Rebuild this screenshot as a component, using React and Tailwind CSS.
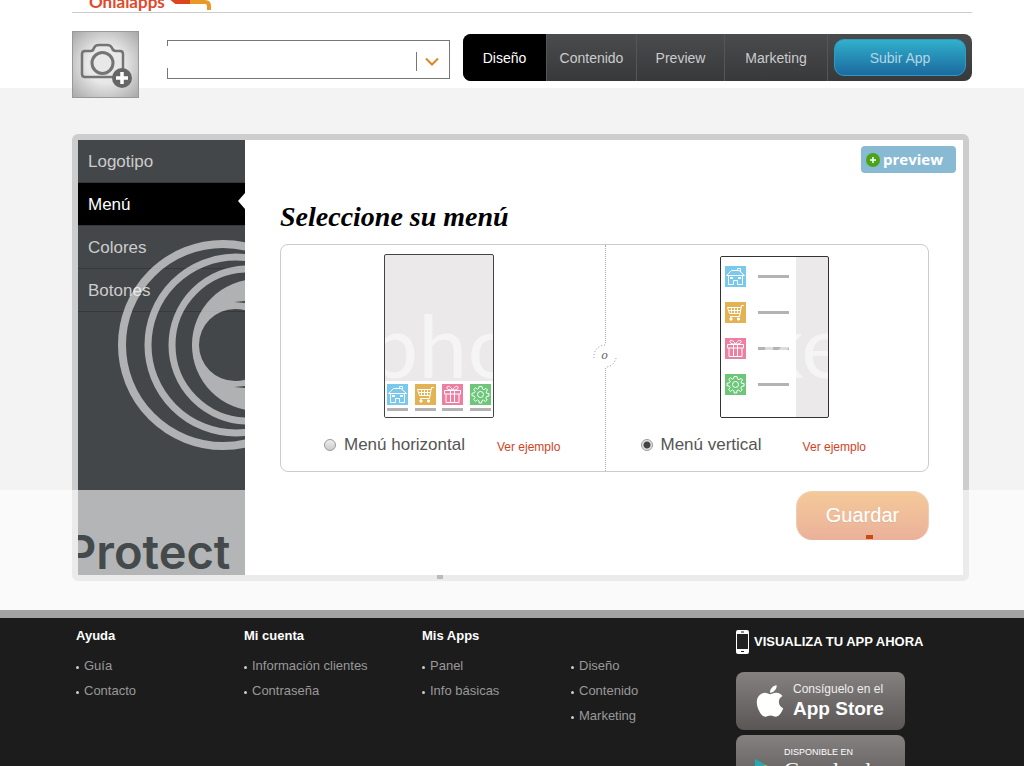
import React, { useState } from "react";
import { FaApple } from "react-icons/fa";

const tabs = [
  { name: "Diseño", width: "w-[84px]" },
  { name: "Contenido", width: "w-[90px]" },
  { name: "Preview", width: "w-[88px]" },
  { name: "Marketing", width: "w-[103px]" },
];

const sections = ["Logotipo", "Menú", "Colores", "Botones"];

const footerColumns = [
  { title: "Ayuda", links: ["Guía", "Contacto"] },
  { title: "Mi cuenta", links: ["Información clientes", "Contraseña"] },
  { title: "Mis Apps", links: ["Panel", "Info básicas"] },
  { title: "", links: ["Diseño", "Contenido", "Marketing"] },
];

const HomeTile = () => (
  <svg viewBox="0 0 21 21" className="w-[21px] h-[21px] bg-[#79c9ec]" fill="none" stroke="#fff">
    <path d="M1.5 9.5 L6.5 4.5 H14 L19.5 9.5 Z M3.5 9.5 V18.5 H8.5 V14.5 H12.5 V18.5 H17.5 V9.5 M12.5 4.5 V2.5 H15.5 V6" />
    <path d="M5 12 H8 M13 12 H16" strokeWidth="2" />
  </svg>
);

const CartTile = () => (
  <svg viewBox="0 0 21 21" className="w-[21px] h-[21px] bg-[#e3b253]" fill="none" stroke="#fff">
    <path d="M19 3.5 H16.5 L14.5 14.5 H5 M16 5.5 H2.5 L4.5 11.5 H15 M3.5 8.5 H15.5 M6.5 5.5 V11.5 M9.5 5.5 V11.5 M12.5 5.5 V11.5" />
    <circle cx="6" cy="17" r="1.2" fill="#fff" />
    <circle cx="13.5" cy="17" r="1.2" fill="#fff" />
  </svg>
);

const GiftTile = () => (
  <svg viewBox="0 0 21 21" className="w-[21px] h-[21px] bg-[#ec7fa2]" fill="none" stroke="#fff">
    <path d="M2.5 6.5 H18.5 V10 H2.5 Z M4 10 V18.5 H17 V10 M8.5 6.5 V18.5 M12.5 6.5 V18.5" />
    <path d="M10.5 6 C8 1.5 4.5 1.5 5 4 C5.5 6 8 6 10.5 6 C13 1.5 16.5 1.5 16 4 C15.5 6 13 6 10.5 6" />
  </svg>
);

const GearTile = () => (
  <svg viewBox="0 0 21 21" className="w-[21px] h-[21px] bg-[#6cc878]" fill="none" stroke="#fff">
    <circle cx="10.5" cy="10.5" r="3" />
    <path d="M9 2.5 H12 L12.5 5 L14 5.7 L16 4.3 L17.5 6 L16 8 L16.5 9.3 L19 9.5 V12 L16.5 12.5 L15.8 14 L17.2 16 L15.5 17.5 L13.5 16 L12 16.5 L11.7 19 H9.3 L8.8 16.5 L7.5 15.9 L5.5 17.3 L3.7 15.5 L5.1 13.5 L4.5 12.2 L2 11.7 V9.3 L4.5 8.8 L5.2 7.3 L3.8 5.3 L5.5 3.8 L7.5 5.2 L8.6 4.7 Z" />
  </svg>
);

const tiles = [HomeTile, CartTile, GiftTile, GearTile];

const HorizontalPhone = () => (
  <div className="relative w-[110px] h-[164px] rounded-xs border border-[#444] bg-[#ebe9ea] flex flex-col justify-end overflow-hidden">
    <svg className="absolute left-0 top-0 w-full h-full" viewBox="0 0 108 162">
      <text x="-16" y="123" fontFamily="Lato" fontSize="88" fill="#fff" fillOpacity="0.55">
        pho
      </text>
    </svg>
    <div className="relative bg-white h-9 pt-[3px] px-0.5 flex justify-between">
      {tiles.map((Tile, index) => (
        <div key={index} className="flex flex-col gap-[3px]">
          <Tile />
          <span className="h-[3px] bg-[#b3b3b3]" />
        </div>
      ))}
    </div>
  </div>
);

const VerticalPhone = () => (
  <div className="relative w-[109px] h-[162px] rounded-xs border border-[#333] bg-[#ebe9ea] overflow-hidden">
    <div className="w-[75px] h-full bg-white pt-[9px] pl-1 flex flex-col gap-[15px]">
      {tiles.map((Tile, index) => (
        <div key={index} className="flex items-center gap-3">
          <Tile />
          <span className="w-[31px] h-[3px] bg-[#b3b3b3]" />
        </div>
      ))}
    </div>
    <svg className="absolute left-0 top-0 w-full h-full" viewBox="0 0 107 160">
      <text x="38" y="121" fontFamily="Lato" fontSize="88" fill="#fff" fillOpacity="0.55">
        ke
      </text>
    </svg>
  </div>
);

const MenuOption = ({ value, label, selected, onSelect, rowClass }) => (
  <div className={`flex items-center text-[#555] ${rowClass}`}>
    <label className="flex items-center gap-2 text-[17px] leading-6">
      <input
        type="radio"
        name="menu"
        value={value}
        checked={selected}
        onChange={() => onSelect(value)}
        className="appearance-none w-3 h-3 rounded-full border border-[#999] bg-linear-to-b from-[#eee] to-[#ccc] checked:bg-[radial-gradient(circle,#444_0_3px,#e4e4e4_4px)]"
      />
      {label}
    </label>
    <a href="#ejemplo" className="text-xs leading-6 pt-1 text-[#d0431f]">
      Ver ejemplo
    </a>
  </div>
);

const Header = () => {
  const [activeTab, setActiveTab] = useState("Diseño");

  return (
    <header className="h-[88px] bg-white pl-[72px] pr-[52px]">
      <div className="h-[13px] border-b border-[#ccc] pl-[17px] flex items-end overflow-hidden">
        <a href="#inicio" className="flex items-end gap-1">
          <span className="font-['Lato',sans-serif] font-bold text-[17px] leading-4 text-[#e2492a] pb-0.5">
            Onialapps
          </span>
          <svg className="w-12 h-3" viewBox="0 0 48 12" fill="none" strokeWidth="4">
            <path d="M1 -3 L7 2 H22" stroke="#df4420" />
            <path d="M21 2 H36 Q40 2 40 6 V10" stroke="#e79a26" />
          </svg>
        </a>
      </div>

      <div className="pt-[18px] flex items-start">
        <button
          aria-label="Cambiar foto"
          className="w-[67px] h-[67px] shrink-0 border border-[#999] bg-[radial-gradient(circle,#e8e8e8_40%,#a8a8a8_100%)] flex items-center justify-center"
        >
          <svg className="w-[52px] h-[46px]" viewBox="0 0 52 46" fill="none" stroke="#747474" strokeWidth="2.5">
            <path d="M34 35 H5 Q2 35 2 32 V12 Q2 9 5 9 H11 Q13 9 14 6 Q15 3 19 3 H27 Q31 3 32 6 Q33 9 36 9 H40 Q43 9 43 12 V27" />
            <circle cx="22.5" cy="21" r="10.5" strokeWidth="3" />
            <circle cx="42" cy="36" r="10" fill="#666" stroke="none" />
            <path d="M42 30 V42 M36 36 H48" stroke="#fff" strokeWidth="3.5" />
          </svg>
        </button>

        <div className="relative flex-1 ml-7 mt-[9px]">
          <select
            aria-label="Aplicación"
            className="appearance-none block w-full h-[39px] border border-[#777] bg-white px-3 text-sm"
          >
            <option value=""></option>
          </select>
          <span className="absolute left-0 top-[6px] w-px h-[22px] bg-white" />
          <svg className="absolute right-2 top-3 w-7 h-5 pointer-events-none" viewBox="0 0 28 20" fill="none">
            <path d="M2.5 0 V19" stroke="#777" />
            <path d="M12 6.5 L18 12.5 L24 6.5" stroke="#e08427" strokeWidth="2" />
          </svg>
        </div>

        <nav className="ml-[13px] mt-[3px] h-[47px] flex items-center rounded-lg overflow-hidden bg-linear-to-b from-[#4a4b4d] to-[#38393b] text-sm">
          {tabs.map((tab) => (
            <button
              key={tab.name}
              onClick={() => setActiveTab(tab.name)}
              className={`${tab.width} h-full border-r border-[#555658] ${
                activeTab === tab.name ? "bg-black text-white" : "text-[#ccc]"
              }`}
            >
              {tab.name}
            </button>
          ))}
          <button className="w-[132px] h-[37px] mx-[6px] rounded-[10px] border border-[#2e9cc0] bg-linear-to-b from-[#31b0cb] to-[#1c6a9f] text-[#b5d5e5]">
            Subir App
          </button>
        </nav>
      </div>
    </header>
  );
};

const Sidebar = () => (
  <aside className="relative w-[167px] shrink-0 bg-[#44474a] overflow-hidden">
    <ul>
      {sections.map((section) => (
        <li
          key={section}
          className={`relative h-[43px] border-b border-[#36393b] ${
            section === "Menú" ? "bg-black text-white" : "text-[#ccc]"
          }`}
        >
          <a href={`#${section}`} className="block pl-[10px] text-[17px] leading-[44px]">
            {section}
          </a>
          {section === "Menú" && (
            <svg className="absolute right-0 top-[10px] w-[7px] h-4" viewBox="0 0 7 16">
              <path d="M7 0 L0 8 L7 16 Z" fill="#fff" />
            </svg>
          )}
        </li>
      ))}
    </ul>
    <svg
      className="absolute left-0 top-0 w-[167px] h-[350px] pointer-events-none"
      viewBox="0 0 167 350"
      fill="none"
      stroke="#fff"
      strokeOpacity="0.58"
      strokeWidth="7"
    >
      <circle cx="145" cy="205" r="101" strokeWidth="8" />
      <circle cx="158" cy="205" r="88" />
      <circle cx="170" cy="205" r="76" />
      <path
        d="M180 139 A66 66 0 1 0 180 271 Z M157 169 A36 36 0 1 0 157 241 A36 36 0 0 0 180 233 V177 A36 36 0 0 0 157 169 Z"
        fill="#fff"
        fillOpacity="0.58"
        fillRule="evenodd"
        stroke="none"
      />
      <path d="M156 162 L167 161 V163 Z M156 247 L167 246 V248 Z" fill="#44474a" stroke="none" />
    </svg>
  </aside>
);

const Editor = () => {
  const [menu, setMenu] = useState("vertical");

  return (
    <main className="relative pt-[46px] pb-[29px] pl-[72px] pr-[55px]">
      <div className="min-h-[447px] border-6 border-[#cdcdcd] rounded-md bg-white flex">
        <Sidebar />
        <section className="flex-1 flex flex-col">
          <div className="flex justify-end pt-[6px] pr-[7px]">
            <button className="h-[27px] w-[95px] pl-[5px] rounded bg-[#89bad4] flex items-center gap-[3px] font-['Open_Sans',sans-serif] font-bold text-[15px] text-white">
              <svg className="w-[14px] h-[14px]" viewBox="0 0 14 14">
                <circle cx="7" cy="7" r="7" fill="#4ba316" />
                <path d="M7 4 V10 M4 7 H10" stroke="#fff" strokeWidth="1.5" />
              </svg>
              <span className="leading-6 pb-0.5">preview</span>
            </button>
          </div>

          <div className="pl-[35px] pr-[34px]">
            <h1 className="pt-[30px] font-['Liberation_Serif',serif] font-bold italic text-[28px] leading-7 text-black">
              Seleccione su menú
            </h1>

            <div className="relative mt-[13px] h-[228px] grid grid-cols-2 border border-[#ccc] rounded-lg">
              <div className="pt-[9px] flex flex-col">
                <div className="pl-[103px]">
                  <HorizontalPhone />
                </div>
                <MenuOption
                  value="horizontal"
                  label="Menú horizontal"
                  selected={menu === "horizontal"}
                  onSelect={setMenu}
                  rowClass="pl-[43px] pt-[13px] gap-8"
                />
              </div>
              <div className="pt-[11px] flex flex-col border-l border-dotted border-[#aaa]">
                <div className="pl-[114px]">
                  <VerticalPhone />
                </div>
                <MenuOption
                  value="vertical"
                  label="Menú vertical"
                  selected={menu === "vertical"}
                  onSelect={setMenu}
                  rowClass="pl-[35px] pt-[13px] gap-[41px]"
                />
              </div>
              <span className="absolute left-1/2 top-[99px] -ml-3 w-6 h-6 rounded-full bg-white text-center font-['DejaVu_Serif',serif] italic text-[11px] leading-6 text-[#666]">
                o
                <svg
                  className="absolute left-0 top-0 w-6 h-6"
                  viewBox="0 0 24 24"
                  fill="none"
                  stroke="#888"
                  strokeDasharray="1 2"
                >
                  <path d="M1 14 A11.5 11.5 0 0 1 12 1 M23 14 A11.5 11.5 0 0 1 14 23" />
                </svg>
              </span>
            </div>

            <div className="flex justify-end pt-[19px]">
              <button className="w-[133px] h-[49px] pb-0.5 rounded-2xl border border-[#d08a4a] border-b-0 bg-linear-to-b from-[#e47800] to-[#cd3a05] text-white text-xl text-shadow-xs">
                Guardar
              </button>
            </div>
          </div>
        </section>
      </div>

      {/* Translucent band over the lower part of the page */}
      <div className="absolute left-0 right-0 top-[402px] bottom-0 bg-white/60 pointer-events-none overflow-hidden">
        <svg className="w-[960px] h-[120px]" viewBox="0 0 960 120">
          <clipPath id="band-clip">
            <rect x="78" y="0" width="167" height="85" />
          </clipPath>
          <text
            x="66"
            y="79"
            fontFamily="Inter"
            fontWeight="600"
            fontSize="47"
            fill="#44494c"
            clipPath="url(#band-clip)"
          >
            Protect
          </text>
          <rect x="866" y="45" width="7" height="4" fill="#cc4a12" />
          <rect x="437" y="85" width="6" height="4" fill="#bbb" />
        </svg>
      </div>
    </main>
  );
};

const Footer = () => (
  <footer className="border-t-8 border-[#a3a3a3] bg-[#1c1c1c] min-h-[200px] pl-[76px] pr-[55px] text-[13px] grid grid-cols-[168px_178px_149px_165px_1fr] items-start">
    {footerColumns.map((column, index) => (
      <div key={index} className="pt-2">
        <h2 className="h-5 leading-5 font-bold text-white">{column.title}</h2>
        <ul className="pt-[7px]">
          {column.links.map((link) => (
            <li key={link} className="flex items-center gap-[5px] leading-[25px]">
              <span className="w-[3px] h-[3px] mt-1 rounded-full bg-[#ccc]" />
              <a href={`#${link}`} className="text-[#999]">
                {link}
              </a>
            </li>
          ))}
        </ul>
      </div>
    ))}

    <div className="pt-3">
      <h2 className="flex items-center gap-[5px] font-bold text-white leading-6 whitespace-nowrap">
        <svg className="w-[13px] h-6" viewBox="0 0 13 24">
          <rect x="0" y="0" width="13" height="24" rx="2" fill="#fff" />
          <rect x="1" y="4" width="11" height="15" fill="#222" />
          <path d="M5 2 H8 M5 21.5 H8" stroke="#222" />
        </svg>
        VISUALIZA TU APP AHORA
      </h2>
      <a
        href="#appstore"
        className="mt-[18px] w-[169px] h-[58px] rounded-lg bg-linear-to-b from-[#858180] to-[#595655] flex items-center pl-5 gap-[9px] text-white"
      >
        <FaApple className="w-7 h-9" />
        <span className="flex flex-col">
          <span className="text-xs leading-4 text-[#eee]">Consíguelo en el</span>
          <span className="text-[19px] leading-6 font-bold">App Store</span>
        </span>
      </a>
      <a
        href="#googleplay"
        className="mt-[5px] w-[169px] h-[58px] rounded-lg bg-linear-to-b from-[#858180] to-[#595655] flex items-start pt-[11px] pl-[18px] gap-2 text-white"
      >
        <svg className="w-[22px] h-[34px] pt-3" viewBox="0 0 22 24">
          <path d="M0 1 L11 7 L6 12 L0 18 Z" fill="#2aa7b5" />
          <path d="M11 7 L20 12 L0 23 Z" fill="#9cc24a" />
        </svg>
        <span className="flex flex-col">
          <span className="text-[9px] leading-3">DISPONIBLE EN</span>
          <span className="font-['Liberation_Serif',serif] text-[22px] leading-6">Google play</span>
        </span>
      </a>
    </div>
  </footer>
);

const App = () => {
  return (
    <div className="h-screen overflow-hidden bg-[#f3f3f3] font-['Liberation_Sans',Arial,sans-serif]">
      <Header />
      <Editor />
      <Footer />
    </div>
  );
};

export default App;
